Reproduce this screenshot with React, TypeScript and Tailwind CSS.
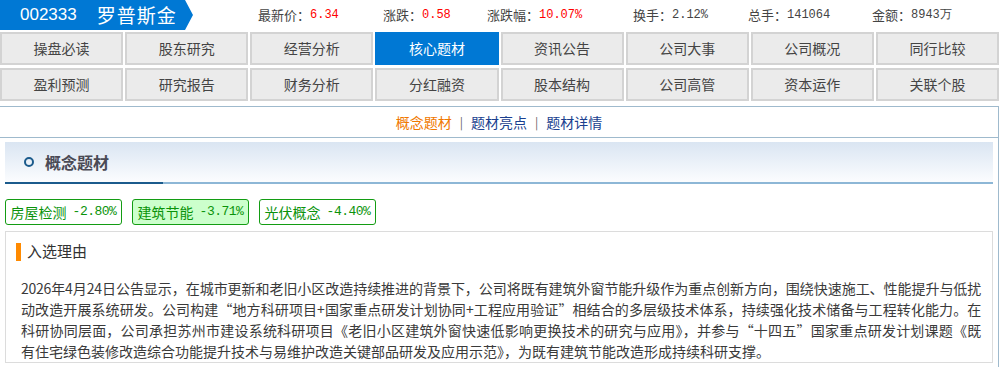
import React from "react";

const stats = [
  { label: "最新价：", value: "6.34", w: "w-[125px]", red: true },
  { label: "涨跌：", value: "0.58", w: "w-[104px]", red: true },
  { label: "涨跌幅：", value: "10.07%", w: "w-[146px]", red: true },
  { label: "换手：", value: "2.12%", w: "w-[115px]", red: false },
  { label: "总手：", value: "141064", w: "w-[124px]", red: false },
  { label: "金额：", value: "8943万", w: "w-[110px]", red: false },
];

const tabs = [
  "操盘必读", "股东研究", "经营分析", "核心题材", "资讯公告", "公司大事", "公司概况", "同行比较",
  "盈利预测", "研究报告", "财务分析", "分红融资", "股本结构", "公司高管", "资本运作", "关联个股",
];

const tags = [
  { name: "房屋检测", pct: "-2.80%", on: false },
  { name: "建筑节能", pct: "-3.71%", on: true },
  { name: "光伏概念", pct: "-4.40%", on: false },
];

// 原文按截图分行，前三行两端对齐
const lines = [
  "2026年4月24日公告显示，在城市更新和老旧小区改造持续推进的背景下，公司将既有建筑外窗节能升级作为重点创新方向，围绕快速施工、性能提升与低扰",
  "动改造开展系统研发。公司构建“地方科研项目+国家重点研发计划协同+工程应用验证”相结合的多层级技术体系，持续强化技术储备与工程转化能力。在",
  "科研协同层面，公司承担苏州市建设系统科研项目《老旧小区建筑外窗快速低影响更换技术的研究与应用》，并参与“十四五”国家重点研发计划课题《既",
];
const lastLine = "有住宅绿色装修改造综合功能提升技术与易维护改造关键部品研发及应用示范》，为既有建筑节能改造形成持续科研支撑。";

export default function App() {
  return (
    <div className="w-[999px] h-[367px] overflow-hidden bg-white font-['Noto_Sans_CJK_SC',sans-serif] text-[#333]">
      {/* 顶部股票信息 */}
      <div className="flex items-center h-[30px]">
        <div className="flex items-center h-full w-[193px] bg-[#0078d4] text-white [clip-path:polygon(0_0,185px_0,193px_50%,185px_100%,0_100%)]">
          <span className="ml-[20px] text-[17px] font-['Liberation_Sans',sans-serif]">002333</span>
          <span className="ml-[20px] text-[19px] tracking-[1px]">罗普斯金</span>
        </div>
        <div className="flex items-center ml-[65px] text-[13px]">
          {stats.map((s) => (
            <div key={s.label} className={`${s.w} flex items-center whitespace-nowrap`}>
              <span className="text-[#444]">{s.label}</span>
              <span className={`text-[12px] font-['Liberation_Mono',monospace] ${s.red ? "text-[#ff0000]" : "text-[#444]"}`}>{s.value}</span>
            </div>
          ))}
        </div>
      </div>

      {/* 导航 */}
      <div className="grid grid-cols-8 gap-x-[2px] gap-y-[3px] mt-[2px]">
        {tabs.map((t) => {
          const active = t === "核心题材";
          return (
            <div
              key={t}
              className={`h-[33px] flex items-center justify-center border-2 text-[14px] ${
                active ? "bg-[#0078d4] border-[#0078d4] text-white" : "bg-[#ebebeb] border-[#d3d3d3] text-[#444]"
              }`}
            >
              {t}
            </div>
          );
        })}
      </div>

      {/* 内容面板 */}
      <div className="mt-[5px] border-t border-r border-[#9fbacd] px-[5px] pb-4">
        <div className="-mx-[5px] h-[31px] border-b border-[#9fbacd] flex items-center justify-center text-[14px]">
          <span className="text-[#f07800]">概念题材</span>
          <span className="mx-[8px] text-[#666] text-[12px]">|</span>
          <span className="text-[#1a3f8f]">题材亮点</span>
          <span className="mx-[8px] text-[#666] text-[12px]">|</span>
          <span className="text-[#1a3f8f]">题材详情</span>
        </div>

        <div className="mt-[4px] flex flex-col bg-gradient-to-b from-[#dae5f2] to-[#fdfeff]">
          <div className="h-[40px] flex items-center">
            <span className="ml-[19px] w-[10px] h-[10px] rounded-full border-2 border-[#1b5b8c]"></span>
            <span className="ml-[11px] text-[16px] font-bold text-[#4a4a55]">概念题材</span>
          </div>
          <div className="flex h-[2px]">
            <div className="w-[158px] bg-[#1b5b8c]"></div>
            <div className="flex-1 bg-[#8db7d6]"></div>
          </div>
        </div>

        <div className="mt-[15px] flex gap-[10px]">
          {tags.map((t) => (
            <div
              key={t.name}
              className={`w-[117px] h-[26px] flex items-center justify-center rounded-[3px] border border-[#139c13] text-[14px] text-[#0a930a] ${
                t.on ? "bg-[#ccffcc]" : "bg-white"
              }`}
            >
              <span>{t.name}</span>
              <span className="ml-[6px] text-[13px] tracking-[-0.5px] font-['Liberation_Mono',monospace]">{t.pct}</span>
            </div>
          ))}
        </div>

        <div className="mt-[6px] border border-[#dcdcdc] pt-[10px] pl-[15px] pr-[11px]">
          <div className="flex items-center h-[19px] -ml-[5px]">
            <span className="w-[5px] h-[18px] bg-[#ff8a00]"></span>
            <span className="ml-[6px] text-[15px] text-[#333]">入选理由</span>
          </div>
          <p className="mt-[17px] text-[14px] leading-[21px] text-[#3a3a3a] text-justify">
            {lines.map((l) => (
              <span key={l} className="block whitespace-nowrap tracking-[-0.3px] [text-align-last:justify]">{l}</span>
            ))}
            <span className="block whitespace-nowrap">{lastLine}</span>
          </p>
        </div>
      </div>
    </div>
  );
}
